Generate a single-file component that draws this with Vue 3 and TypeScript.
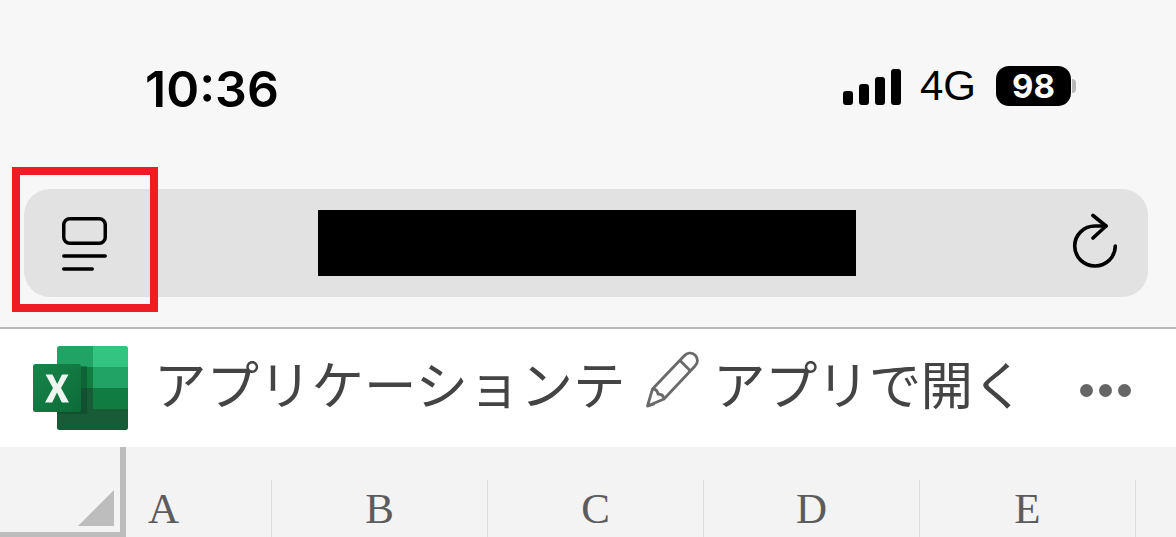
<script setup lang="ts">
const columns: string[] = ['A', 'B', 'C', 'D', 'E']
const signalBars: number[] = [14, 21, 28, 36]
</script>

<template>
  <main class="page">
    <header class="status">
      <span class="time">10:36</span>
      <div class="indicators">
        <div class="signal">
          <i v-for="h in signalBars" :key="h" class="bar" :style="{ height: h + 'px' }"></i>
        </div>
        <span class="network">4G</span>
        <div class="battery"><span>98</span></div>
        <i class="cap"></i>
      </div>
    </header>

    <section class="address">
      <svg class="tabs" width="48" height="60" viewBox="0 0 48 60" fill="none" stroke="#000" stroke-linecap="round" stroke-width="3.500">
        <rect x="2.750" y="5.750" width="41.500" height="24.500" rx="6" />
        <path d="M2.750 43H44.250M2.750 56H31.200" />
      </svg>
      <div class="redacted"></div>
      <svg class="reload" width="50" height="60" viewBox="0 0 50 60" fill="none" stroke="#000" stroke-linecap="round" stroke-linejoin="round" stroke-width="3.600">
        <path d="M47.300 33A20.300 20 0 1 1 27 13H38" />
        <path d="M25 2.500L38 13L25 25" />
      </svg>
    </section>

    <nav class="toolbar">
      <svg class="logo" width="96" height="84" viewBox="0 0 96 84">
        <defs>
          <linearGradient id="tile" x1="0" y1="0" x2="1" y2="1">
            <stop offset="0" stop-color="#18854a" />
            <stop offset="1" stop-color="#0c6b39" />
          </linearGradient>
          <clipPath id="sheet"><rect x="24" y="0" width="71" height="84" rx="2.500" /></clipPath>
        </defs>
        <g clip-path="url(#sheet)">
          <rect x="24" y="0" width="36" height="21" fill="#21a366" />
          <rect x="60" y="0" width="36" height="21" fill="#33c481" />
          <rect x="24" y="21" width="36" height="21" fill="#107c41" />
          <rect x="60" y="21" width="36" height="21" fill="#21a366" />
          <rect x="24" y="42" width="36" height="21" fill="#185c37" />
          <rect x="60" y="42" width="36" height="21" fill="#107c41" />
          <rect x="24" y="63" width="72" height="21" fill="#185c37" />
          <rect x="24" y="20" width="30" height="48" fill="#0b3f24" opacity=".4" />
        </g>
        <rect x="0" y="18" width="48" height="48" rx="2.500" fill="url(#tile)" />
        <path d="M12.500 28.500H19.500L24.200 38L29 28.500H35.500L28 42L36 56.500H28.800L24 46.500L19.200 56.500H12L20 42Z" fill="#eef5f0" />
      </svg>
      <span class="doc">アプリケーションテ</span>
      <svg class="pencil" width="54" height="58" viewBox="0 0 54 58" fill="none" stroke="#6a6a6a" stroke-width="2.800" stroke-linejoin="round">
        <path d="M2.500 56L7.500 39L39 6C42 2.500 46.500 2 50 5C53.500 8.500 53 13 50 16L19 49Z" />
        <path d="M7.500 39C11 39 12.500 40.500 13 44C16.500 44 18.500 45.500 19 49M2.500 56L9.500 54M35 10.500L45.500 21" />
      </svg>
      <span class="open">アプリで開く</span>
      <span class="more"><i></i><i></i><i></i></span>
    </nav>

    <section class="sheet-head">
      <div class="corner"><i class="triangle"></i></div>
      <div v-for="c in columns" :key="c" class="col" :class="{ first: c === 'A' }">
        <span>{{ c }}</span>
      </div>
    </section>

    <div class="highlight"></div>
  </main>
</template>

<style scoped>
.page {
  position: relative;
  width: 1176px;
  height: 537px;
  overflow: hidden;
  background: #f7f7f7;
  font-family: "Noto Sans CJK JP", "Liberation Sans", sans-serif;
  color: #000;
}
.status {
  height: 189px;
  box-sizing: border-box;
  padding: 62px 100px 0 145px;
  display: flex;
  justify-content: space-between;
  align-items: flex-start;
}
.time {
  font-family: Inter, "Liberation Sans", sans-serif;
  font-size: 50px;
  font-weight: 600;
  line-height: 54px;
}
.indicators {
  display: flex;
  align-items: center;
  height: 46px;
  margin-top: 1px;
}
.signal {
  display: flex;
  align-items: flex-end;
  gap: 6px;
  margin-right: 19px;
  margin-top: 1px;
}
.bar {
  width: 10px;
  border-radius: 3px;
  background: #000;
}
.network {
  font-family: "Liberation Sans", sans-serif;
  font-size: 42px;
  line-height: 46px;
  margin-right: 20px;
}
.battery {
  width: 75px;
  height: 40px;
  border-radius: 13px;
  background: #000;
  color: #fff;
  display: flex;
  align-items: center;
  justify-content: center;
}
.battery span {
  font-family: Inter, "Liberation Sans", sans-serif;
  font-size: 33px;
  font-weight: 700;
  line-height: 40px;
}
.cap {
  width: 4px;
  height: 14px;
  margin-left: 1px;
  border-radius: 0 7px 7px 0;
  background: #b8b8b8;
}
.address {
  width: 1124px;
  height: 108px;
  margin: 0 0 30px 24px;
  box-sizing: border-box;
  padding: 0 30px 0 37px;
  background: #e2e2e2;
  border-radius: 26px;
  display: flex;
  align-items: center;
  justify-content: space-between;
}
.tabs {
  flex: none;
}
.redacted {
  width: 538px;
  height: 66px;
  margin-left: -3px;
  background: #000;
}
.reload {
  flex: none;
}
.toolbar {
  height: 120px;
  box-sizing: border-box;
  border-top: 2px solid #b9b9b9;
  padding: 0 0 0 33px;
  background: #fff;
  display: flex;
  align-items: center;
  color: #444;
  font-size: 52.500px;
  font-weight: 400;
  white-space: nowrap;
}
.logo {
  flex: none;
  margin-right: 25px;
}
.doc {
  width: 472px;
  flex: none;
  overflow: hidden;
  margin-top: -12px;
}
.pencil {
  flex: none;
  margin: 0 14px 0 19px;
  position: relative;
  top: -9px;
}
.open {
  flex: none;
  margin-top: -12px;
  letter-spacing: -0.600px;
}
.more {
  display: flex;
  gap: 6px;
  margin-left: 56px;
  margin-top: 4px;
}
.more i {
  width: 13px;
  height: 13px;
  border-radius: 50%;
  background: #666;
}
.sheet-head {
  height: 90px;
  background: #f3f3f3;
  display: flex;
  color: #5c5c5c;
  font-family: "Liberation Serif", serif;
  font-size: 43px;
}
.corner {
  position: relative;
  flex: none;
  width: 126px;
  height: 90px;
  box-sizing: border-box;
  border-right: 6px solid #bdbdbd;
  border-bottom: 5px solid #bdbdbd;
}
.triangle {
  position: absolute;
  right: 6px;
  bottom: 6px;
  width: 36px;
  height: 36px;
  background: #bdbdbd;
  clip-path: polygon(100% 0, 100% 100%, 0 100%);
}
.col {
  flex: none;
  width: 216px;
  height: 57px;
  margin-top: 33px;
  box-sizing: border-box;
  border-right: 1px solid #dcdcdc;
  display: flex;
  align-items: center;
  justify-content: center;
}
.col.first {
  width: 146px;
  justify-content: flex-start;
  padding-left: 22px;
}
.col span {
  line-height: 57px;
}
.highlight {
  position: absolute;
  left: 12px;
  top: 167px;
  width: 146px;
  height: 145px;
  box-sizing: border-box;
  border: 8px solid #ee1c25;
}
</style>
